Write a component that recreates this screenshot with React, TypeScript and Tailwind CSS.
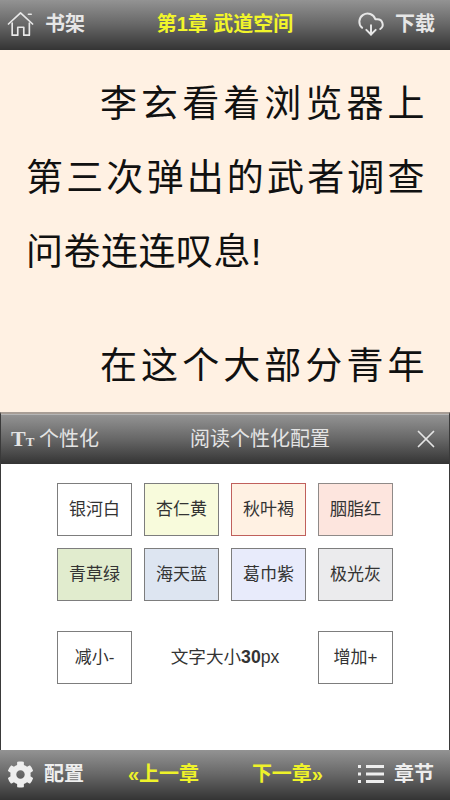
import { CloudDownload, X } from "lucide-react";
import { FaCog } from "react-icons/fa";

const bar = "bg-[linear-gradient(#939393,#666666_50%,#343434)]";

const themes = [
  { name: "银河白", cls: "bg-white border-[#7d7d7d]" },
  { name: "杏仁黄", cls: "bg-[#f8fbdc] border-[#7d7d7d]" },
  { name: "秋叶褐", cls: "bg-[#fff1e3] border-[#c0605c]" },
  { name: "胭脂红", cls: "bg-[#fde5de] border-[#8f8a88]" },
  { name: "青草绿", cls: "bg-[#e1ecce] border-[#7d7d7d]" },
  { name: "海天蓝", cls: "bg-[#dde5f1] border-[#7d7d7d]" },
  { name: "葛巾紫", cls: "bg-[#e8ebfb] border-[#7d7d7d]" },
  { name: "极光灰", cls: "bg-[#ebebed] border-[#7d7d7d]" },
];

function HomeIcon() {
  return (
    <svg width="28" height="26" viewBox="0 0 30 28" fill="none" stroke="#e8e8e8" strokeWidth="1.8" strokeLinejoin="round" strokeLinecap="round">
      <path d="M1.5 14 L14.5 2 L27.5 14" />
      <path d="M23 3.5 L26 3.5" />
      <path d="M5.5 13 V26 H11.5 V17.5 H18 V26 H24 V13" />
    </svg>
  );
}

function ListIcon() {
  return (
    <svg width="26" height="20" viewBox="0 0 26 20" fill="#eeeeee">
      <rect x="0" y="1" width="3" height="3" />
      <rect x="0" y="8.5" width="3" height="3" />
      <rect x="0" y="16" width="3" height="3" />
      <rect x="8" y="1" width="18" height="3" />
      <rect x="8" y="8.5" width="18" height="3" />
      <rect x="8" y="16" width="18" height="3" />
    </svg>
  );
}

export default function App() {
  return (
    <div className="w-[450px] h-[800px] flex flex-col overflow-hidden bg-white font-['Liberation_Sans','Noto_Sans_CJK_SC',sans-serif]">
      <div className={`h-[50px] shrink-0 flex items-center pb-[2px] ${bar}`}>
        <div className="w-[130px] flex items-center pl-[7px] gap-[10px] text-[20px] font-bold text-[#e6e6e6]">
          <HomeIcon />
          <span>书架</span>
        </div>
        <div className="flex-1 text-center text-[20px] font-bold text-[#f1f52a]">第1章 武道空间</div>
        <div className="w-[130px] flex items-center justify-end pr-[15px] gap-[10px] text-[20px] font-bold text-[#e6e6e6]">
          <CloudDownload size={28} strokeWidth={1.7} />
          <span>下载</span>
        </div>
      </div>

      <div className="flex-1 min-h-0 overflow-hidden bg-[#fff1e3] pl-[26px] pt-[18px] text-[37px] leading-[74px] tracking-[0.5px] text-[#111111]">
        <p className="w-[399px] indent-[74px] mb-[40px] text-justify">李玄看着浏览器上第三次弹出的武者调查问卷连连叹息!</p>
        <p className="w-[399px] indent-[74px] text-justify [text-align-last:justify]">在这个大部分青年</p>
      </div>

      <div className="h-[338px] shrink-0 flex flex-col border-x border-t-2 border-t-[#a89e96] border-x-[#3a3a3a]">
        <div className={`h-[50px] shrink-0 flex items-center pb-[2px] text-[#e4e4e4] border-t border-[#b5b5b5] ${bar}`}>
          <div className="w-[130px] flex items-center pl-[10px] text-[20px]">
            <span className="w-[28px] font-['Liberation_Serif',serif] font-bold leading-none">
              <span className="text-[22px]">T</span>
              <span className="text-[13px]">T</span>
            </span>
            <span>个性化</span>
          </div>
          <div className="flex-1 text-center text-[20px]">阅读个性化配置</div>
          <div className="w-[60px] flex justify-end pr-[8px]">
            <X size={30} strokeWidth={1.4} />
          </div>
        </div>

        <div className="flex-1 bg-white pl-[56px] pt-[19px]">
          <div className="grid grid-cols-[repeat(4,75px)] gap-x-[12px] gap-y-[12px]">
            {themes.map((t) => (
              <div key={t.name} className={`h-[53px] border flex items-center justify-center text-[17px] text-[#333333] ${t.cls}`}>
                {t.name}
              </div>
            ))}
          </div>
          <div className="flex items-center mt-[30px] w-[336px]">
            <div className="w-[75px] h-[53px] border border-[#7d7d7d] flex items-center justify-center text-[17px] text-[#333333]">减小-</div>
            <div className="flex-1 text-center text-[17.6px] text-[#333333]">
              文字大小<span className="font-bold">30</span>px
            </div>
            <div className="w-[75px] h-[53px] border border-[#7d7d7d] flex items-center justify-center text-[17px] text-[#333333]">增加+</div>
          </div>
        </div>
      </div>

      <div className={`h-[50px] shrink-0 flex items-center pb-[2px] text-[20px] font-bold ${bar}`}>
        <div className="w-[112px] flex items-center pl-[7px] gap-[10px] text-[#eeeeee]">
          <FaCog size={27} />
          <span>配置</span>
        </div>
        <div className="flex-1 flex justify-between pl-[16px] pr-[15px] text-[#eef22a]">
          <span>«上一章</span>
          <span>下一章»</span>
        </div>
        <div className="w-[112px] flex items-center justify-end pr-[16px] gap-[10px] text-[#eeeeee]">
          <ListIcon />
          <span>章节</span>
        </div>
      </div>
    </div>
  );
}
